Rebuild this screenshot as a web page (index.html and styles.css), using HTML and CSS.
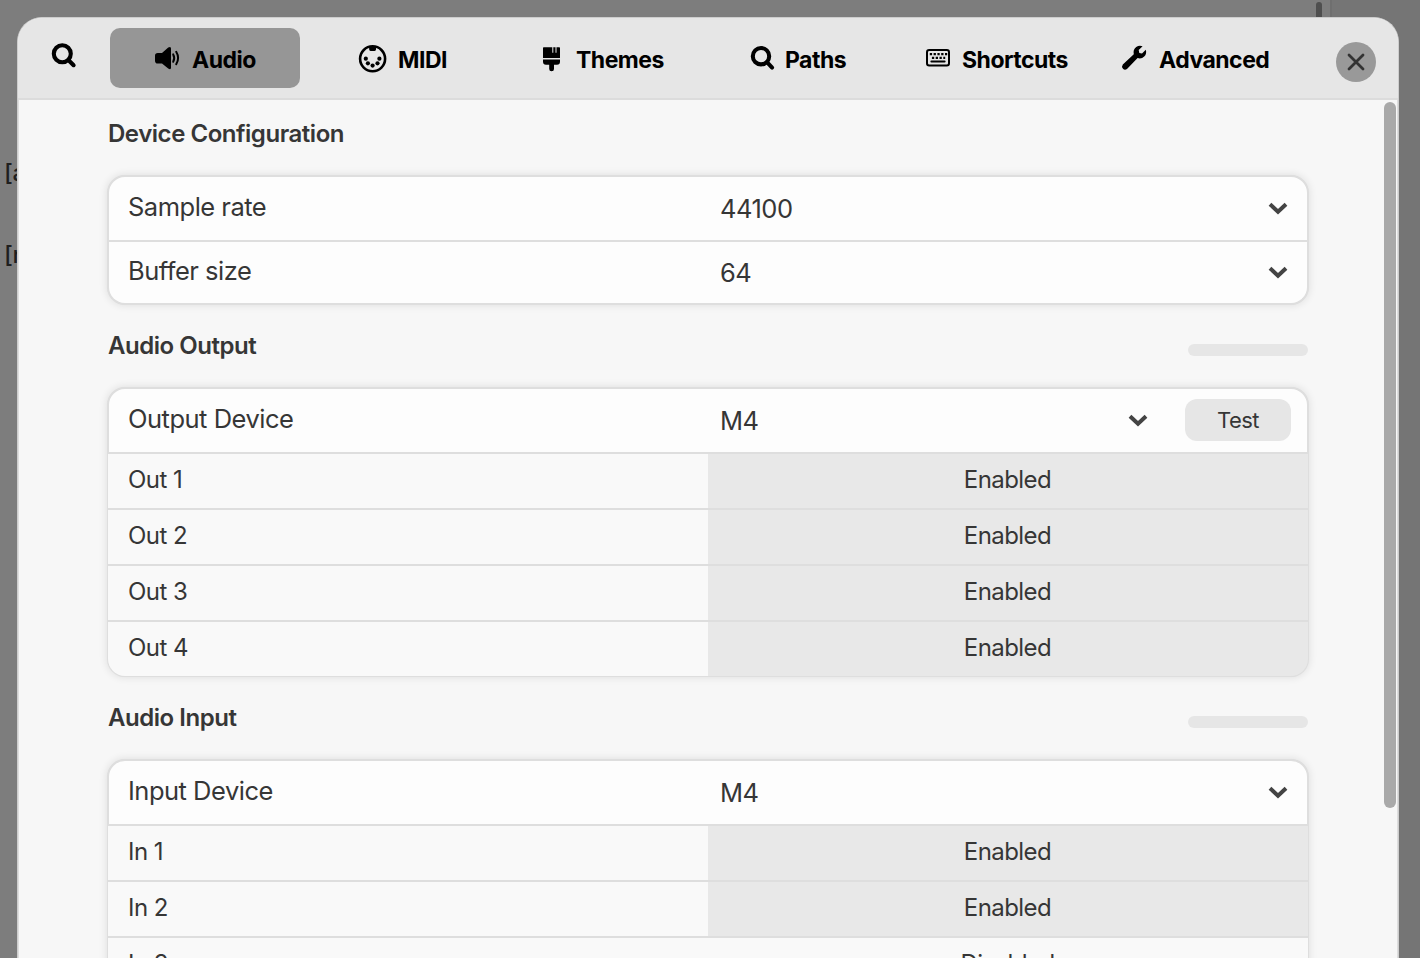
FILE: index.html
```html
<!DOCTYPE html>
<html lang="en">
<head>
<meta charset="utf-8">
<title>Settings</title>
<link rel="stylesheet" href="styles.css">
</head>
<body>
<div class="canvas">
  <span class="object object-a">[adc~]</span>
  <span class="object object-b">[r foo]</span>
  <div class="canvas-scroll"></div>
  <div class="sidebar"></div>
</div>
<main class="dialog">
  <header class="toolbar">
    <svg class="search" viewBox="0 0 30 30"><circle cx="13.3" cy="12.8" r="8.5"/><path d="M19.6 19.2 24.6 24.2"/></svg>
    <nav class="tabs">
      <div class="tab tab-audio active">
        <svg class="icon" viewBox="0 0 30 30"><path d="M3 12.8Q3 10 5.8 10H10L16.2 4.6Q19 3 19 5.5V24.8Q19 27.2 16.2 25.6L10 20.6H5.8Q3 20.6 3 17.8Z"/><path class="thin" d="M21.2 11.4Q23.3 15 21.2 18.8M24.2 8.8Q28 15 24.2 21.2"/></svg>
        <span>Audio</span>
      </div>
      <div class="tab tab-midi">
        <svg class="icon" viewBox="0 0 30 30"><circle class="ring" cx="14.6" cy="15.8" r="12.5"/><path d="M11 3H18V6.6Q18 8 16.6 8H12.6Q11.2 8 11.2 6.6Z"/><circle cx="7.8" cy="15.7" r="2.1"/><circle cx="21.4" cy="15.7" r="2.1"/><circle cx="9.9" cy="20.3" r="2.1"/><circle cx="19.5" cy="20.3" r="2.1"/><circle cx="14.6" cy="22.6" r="2.1"/></svg>
        <span>MIDI</span>
      </div>
      <div class="tab tab-themes">
        <svg class="icon" viewBox="0 0 30 30"><path d="M7 5Q7 4.3 7.7 4.3H16.3V9.7H17.3V4.3H19.5V9.7H20.5V4.3H23.3Q24 4.3 24 5V15H7Z"/><path d="M7 16.5H24V18.5Q24 21.7 21 21.7H18V26Q18 28.2 15.6 28.2T13.2 26V21.7H10Q7 21.7 7 18.5Z"/></svg>
        <span>Themes</span>
      </div>
      <div class="tab tab-paths">
        <svg class="icon" viewBox="0 0 30 30"><circle class="lens" cx="16" cy="13.2" r="8.2"/><path class="lens" d="M22.2 19.4 27.1 24.6"/></svg>
        <span>Paths</span>
      </div>
      <div class="tab tab-shortcuts">
        <svg class="icon" viewBox="0 0 30 30"><rect class="frame" x="5" y="7" width="22" height="15.5" rx="2.2"/><path class="keys" d="M7.8 11.2H25.2"/><path class="keys" d="M9.9 14.9H23.2"/><path class="thin" d="M9.4 18.6H22.6"/></svg>
        <span>Shortcuts</span>
      </div>
      <div class="tab tab-advanced">
        <svg class="icon" viewBox="0 0 30 30"><path d="M3.8 21.6 14.8 11.2Q13.8 6.6 17.2 4Q20.4 1.7 23.6 3.3L19.7 7.1 20.3 10 23 10.5 26.8 6.7Q28 10.8 25.2 13.6Q22.4 16.3 18.6 15.1L8 26Q5.8 27.5 4 25.8Q2.2 23.8 3.8 21.6Z"/></svg>
        <span>Advanced</span>
      </div>
    </nav>
    <div class="close"><svg viewBox="0 0 20 20"><path d="M3 3 17 17M17 3 3 17"/></svg></div>
  </header>
  <div class="content">
    <div class="heading"><h2>Device Configuration</h2></div>
    <section class="panel plain">
      <div class="row"><div class="label">Sample rate</div><div class="value">44100</div><svg class="chevron" viewBox="0 0 20 14"><path d="M2 2.3 10 9.7 18 2.3"/></svg></div>
      <div class="row last"><div class="label">Buffer size</div><div class="value">64</div><svg class="chevron" viewBox="0 0 20 14"><path d="M2 2.3 10 9.7 18 2.3"/></svg></div>
    </section>
    <div class="heading"><h2>Audio Output</h2><div class="meter"></div></div>
    <section class="panel">
      <div class="row"><div class="label">Output Device</div><div class="value">M4</div><svg class="chevron" viewBox="0 0 20 14"><path d="M2 2.3 10 9.7 18 2.3"/></svg><div class="test">Test</div></div>
      <div class="channel"><div class="name">Out 1</div><div class="state">Enabled</div></div>
      <div class="channel"><div class="name">Out 2</div><div class="state">Enabled</div></div>
      <div class="channel"><div class="name">Out 3</div><div class="state">Enabled</div></div>
      <div class="channel"><div class="name">Out 4</div><div class="state">Enabled</div></div>
    </section>
    <div class="heading"><h2>Audio Input</h2><div class="meter"></div></div>
    <section class="panel">
      <div class="row"><div class="label">Input Device</div><div class="value">M4</div><svg class="chevron" viewBox="0 0 20 14"><path d="M2 2.3 10 9.7 18 2.3"/></svg></div>
      <div class="channel"><div class="name">In 1</div><div class="state">Enabled</div></div>
      <div class="channel"><div class="name">In 2</div><div class="state">Enabled</div></div>
      <div class="channel off"><div class="name">In 3</div><div class="state">Disabled</div></div>
    </section>
    <div class="scroll-thumb"></div>
  </div>
</main>
</body>
</html>
```
FILE: styles.css
```css
* { box-sizing: border-box; }
body {
  margin: 0;
  width: 1420px;
  height: 958px;
  overflow: hidden;
  position: relative;
  padding: 17px 21px 0 17px;
  background: #7d7d7d;
  color: #363636;
  font-family: Inter, "Liberation Sans", sans-serif;
  font-weight: 430;
}
.canvas { position: absolute; inset: 0; }
.object { position: absolute; left: 4px; font-size: 24px; line-height: 30px; letter-spacing: -0.4px; font-weight: 500; color: #1f1f1f; }
.object-a { top: 158px; }
.object-b { top: 240px; }
.canvas-scroll { position: absolute; left: 1316px; top: 2px; width: 6px; height: 30px; border-radius: 3px; background: #4f4f4f; }
.sidebar { position: absolute; left: 1330px; right: 0; top: 0; bottom: 0; background: #757575; border-left: 2px solid #6f6f6f; }

.dialog {
  position: relative;
  width: 1382px;
  height: 941px;
  border: 1px solid #cdcdcd;
  border-bottom: 0;
  border-radius: 25px 25px 0 0;
  background: #f7f7f7;
  overflow: hidden;
}
.toolbar {
  display: flex;
  align-items: flex-start;
  height: 82px;
  padding-left: 31px;
  background: #e6e6e6;
  border-bottom: 2px solid #dcdcdc;
}
.search { width: 30px; height: 30px; margin-top: 23px; }
.search, .lens { fill: none; stroke: #000; stroke-width: 4.1; stroke-linecap: round; }
.tabs { display: flex; gap: 8px; margin: 10px 0 0 31px; }
.tab { display: flex; width: 190px; height: 60px; border-radius: 10px; gap: 10px; padding-top: 15px; color: #000; font-weight: 720; font-size: 23px; line-height: 34px; letter-spacing: -0.5px; white-space: nowrap; }
.active { background: #969696; }
.tab-audio { padding-left: 42px; }
.tab-midi { padding-left: 50px; }
.tab-themes { padding-left: 30px; }
.tab-paths { padding-left: 41px; }
.tab-shortcuts { padding-left: 20px; }
.tab-advanced { padding-left: 19px; }
.icon { width: 30px; height: 30px; flex: none; }
.thin, .ring, .frame, .keys { fill: none; stroke: #000; stroke-width: 2; stroke-linecap: round; }
.ring { stroke-width: 2.6; }
.keys { stroke-width: 2.3; stroke-linecap: butt; stroke-dasharray: 2.3 1.5; }
.close { display: flex; align-items: center; justify-content: center; width: 40px; height: 40px; border-radius: 50%; background: #999; margin: 24px 0 0 46px; }
.close svg { width: 20px; height: 20px; fill: none; stroke: #333; stroke-width: 2.8; stroke-linecap: round; }

.content {
  position: relative;
  height: 858px;
  overflow: hidden;
  padding: 0 88px 0 88px;
  border-left: 1px solid #dedede;
  border-right: 1px solid #dedede;
}
.heading { display: flex; justify-content: space-between; height: 75px; padding: 18px 1px 0; }
.panel + .heading { height: 82px; padding-top: 25px; }
h2 { margin: 0; font-size: 24px; line-height: 32px; font-weight: 600; letter-spacing: -0.46px; }
.meter { width: 120px; height: 12px; margin-top: 14px; border-radius: 6px; background: #e6e6e6; }
.panel { width: 1202px; border-radius: 18px; overflow: hidden; box-shadow: 0 0 8px rgba(0,0,0,.11); background: #dedede; }
.row {
  display: flex;
  align-items: center;
  height: 67px;
  border: 2px solid #dedede;
  border-radius: 18px 18px 0 0;
  background: #fdfdfd;
  padding: 0 19px;
  font-size: 25.5px;
  line-height: 32px;
  letter-spacing: -0.5px;
}
.last { height: 63px; border-top: 0; border-radius: 0 0 18px 18px; }
.label { width: 592px; margin-bottom: 3px; }
.value { flex: 1; margin-top: 1px; }
.chevron { width: 20px; height: 14px; fill: none; stroke: #444; stroke-width: 4; }
.test { width: 106px; height: 42px; border-radius: 12px; background: #e6e6e6; font-size: 22px; letter-spacing: -0.5px; line-height: 43px; text-align: center; margin: 0 -3px 1px 37px; }
.channel { display: grid; grid-template-columns: 600px 600px; height: 56px; margin: 0 1px; border-bottom: 2px solid #dedede; font-size: 24px; letter-spacing: -0.55px; line-height: 52px; }
.channel:last-child { height: 55px; border-bottom-width: 1px; }
.name { background: #f9f9f9; padding-left: 20px; }
.state { background: #e8e8e8; text-align: center; padding-right: 1px; }
.channel:last-child .name { border-bottom-left-radius: 17px; }
.channel:last-child .state { border-bottom-right-radius: 17px; }
.off .state { background: #f9f9f9; }
.scroll-thumb { position: absolute; right: 1px; top: 2px; width: 12px; height: 706px; border-radius: 6px; background: #a9a9a9; }
```
